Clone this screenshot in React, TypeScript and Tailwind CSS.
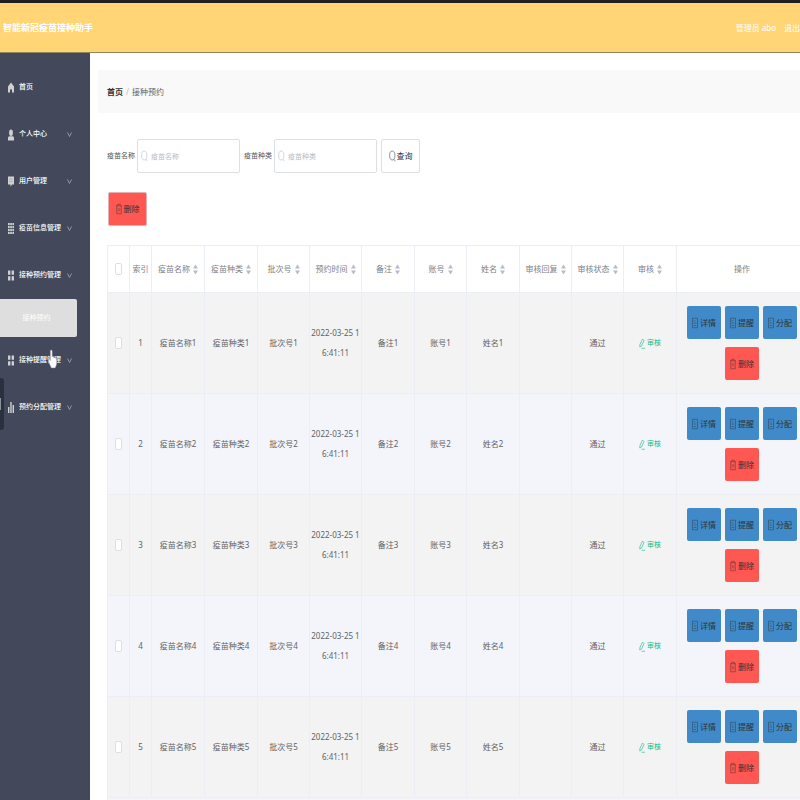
import React from "react";

type IconProps = { className?: string };

function HomeIcon() {
  return (
    <svg className="h-[11px] w-[6px] shrink-0" viewBox="0 0 12 22" fill="currentColor" aria-hidden="true">
      <path d="M6 1 0 9v12h4v-6h4v6h4V9z" />
    </svg>
  );
}

function UserIcon() {
  return (
    <svg className="h-[12px] w-[6px] shrink-0" viewBox="0 0 12 24" fill="currentColor" aria-hidden="true">
      <ellipse cx="6" cy="7.500" rx="3.800" ry="6.500" />
      <path d="M0 23v-5c0-2 1-3 3-3.500h6c2 .5 3 1.500 3 3.500v5z" />
    </svg>
  );
}

function NoteIcon() {
  return (
    <svg className="h-[11px] w-[6px] shrink-0" viewBox="0 0 12 22" fill="currentColor" aria-hidden="true">
      <path d="M0 1h12v16H8l-3 4.500V17H0z" />
      <path d="M2.500 6.500h7M2.500 11h7" stroke="#8f929c" strokeWidth="1" />
    </svg>
  );
}

function GridIcon() {
  return (
    <svg className="h-[11px] w-[6px] shrink-0" viewBox="0 0 12 22" fill="currentColor" aria-hidden="true">
      {[0, 4.4, 8.8].map((x) =>
        [0, 6, 12, 18].map((y) => <rect key={x + "-" + y} x={x} y={y} width="3.400" height="4.400" />)
      )}
    </svg>
  );
}

function MenuIcon() {
  return (
    <svg className="h-[11px] w-[6px] shrink-0" viewBox="0 0 12 22" fill="currentColor" aria-hidden="true">
      <rect x="0" y="1" width="4.800" height="8.500" />
      <rect x="7.200" y="1" width="4.800" height="8.500" />
      <rect x="0" y="12.500" width="4.800" height="8.500" />
      <rect x="7.200" y="12.500" width="4.800" height="8.500" />
    </svg>
  );
}

function BarsIcon() {
  return (
    <svg className="h-[11px] w-[6px] shrink-0" viewBox="0 0 12 22" fill="currentColor" aria-hidden="true">
      <rect x="0" y="10" width="2.800" height="12" />
      <rect x="4.600" y="0" width="2.800" height="22" />
      <rect x="9.200" y="6" width="2.800" height="16" />
    </svg>
  );
}

function ChevronIcon() {
  return (
    <svg className="h-[5px] w-[5px] shrink-0 text-[#9a9eaa]" viewBox="0 0 10 10" fill="none" stroke="currentColor" strokeWidth="1.800" aria-hidden="true">
      <path d="M1 1l4 8 4-8" />
    </svg>
  );
}

function SearchIcon({ className = "" }: IconProps) {
  return (
    <svg className={"h-[12px] w-[7px] shrink-0 " + className} viewBox="0 0 14 24" fill="none" stroke="currentColor" strokeWidth="1.400" aria-hidden="true">
      <ellipse cx="6.500" cy="11" rx="5.300" ry="9" />
      <path d="M9.500 18.500 13 22.500" />
    </svg>
  );
}

function TrashIcon() {
  return (
    <svg className="h-[12px] w-[6px] shrink-0 opacity-80" viewBox="0 0 12 24" fill="none" stroke="currentColor" strokeWidth="1.100" aria-hidden="true">
      <path d="M0 5.500h12M3.500 5.500V2.500h5v3M1.500 5.500V21.500h9V5.500" />
      <path d="M4.600 10v7M7.400 10v7" strokeWidth="0.800" />
    </svg>
  );
}

function DocIcon() {
  return (
    <svg className="h-[12px] w-[6px] shrink-0 opacity-80" viewBox="0 0 12 24" fill="none" stroke="currentColor" strokeWidth="1.100" aria-hidden="true">
      <path d="M1 2.500h10v19H1zM3.500 7.500h3M3.500 12h5M3.500 17h5" />
    </svg>
  );
}

function EditIcon() {
  return (
    <svg className="h-[11px] w-[6px] shrink-0" viewBox="0 0 12 22" fill="none" stroke="currentColor" strokeWidth="1.200" aria-hidden="true">
      <path d="M7 2l3 3-5 11-3.500 2 .5-5.500zM5 20.500h7" />
    </svg>
  );
}

function SortIcon() {
  return (
    <svg className="h-[11px] w-[5px] shrink-0 text-[#b8bcc6]" viewBox="0 0 10 22" fill="currentColor" aria-hidden="true">
      <path d="M5 1l5 8H0zM5 21l5-8H0z" />
    </svg>
  );
}

const menu = [
  { label: "首页", icon: <HomeIcon /> },
  { label: "个人中心", icon: <UserIcon />, more: true },
  { label: "用户管理", icon: <NoteIcon />, more: true },
  { label: "疫苗信息管理", icon: <GridIcon />, more: true },
  { label: "接种预约管理", icon: <MenuIcon />, more: true, child: "接种预约" },
  { label: "接种提醒管理", icon: <MenuIcon />, more: true },
  { label: "预约分配管理", icon: <BarsIcon />, more: true },
];

const columns = [
  "疫苗名称",
  "疫苗种类",
  "批次号",
  "预约时间",
  "备注",
  "账号",
  "姓名",
  "审核回复",
  "审核状态",
  "审核",
];

const rows = [1, 2, 3, 4, 5];

const cell = "border-r border-b border-[#ebeef5] p-0 text-center font-normal";

function Check({ label }: { label: string }) {
  return (
    <input
      type="checkbox"
      aria-label={label}
      className="mx-auto block h-[12px] w-[7px] appearance-none rounded-[2px] border border-[#dcdfe6] bg-white"
    />
  );
}

function ActionButton({ kind, children }: { kind: "info" | "danger"; children: React.ReactNode }) {
  return (
    <button
      type="button"
      className={
        "flex h-[33px] w-[34px] items-center justify-center gap-0.5 rounded-[2px] text-[8px] text-[#303338] " +
        (kind === "info" ? "bg-[#408ac9]" : "bg-[#ff5751]")
      }
    >
      {kind === "info" ? <DocIcon /> : <TrashIcon />}
      <span>{children}</span>
    </button>
  );
}

function SearchField({ id, label }: { id: string; label: string }) {
  return (
    <div className="flex items-center gap-0.5">
      <label htmlFor={id} className="w-[28px] text-[7px] whitespace-nowrap text-[#505255]">
        {label}
      </label>
      <div className="relative">
        <SearchIcon className="absolute top-[11px] left-[4px] text-[#c0c4cc]" />
        <input
          id={id}
          type="text"
          placeholder={label}
          className="h-[34px] w-[103px] rounded-[2px] border border-[#dcdfe6] bg-white pr-1 pl-[13px] text-[7px] placeholder:text-[#b8bcc6]"
        />
      </div>
    </div>
  );
}

export default function App() {
  return (
    <div className="flex h-screen min-h-[800px] flex-col overflow-hidden bg-white font-['Noto_Sans','Noto_Sans_CJK_SC',sans-serif] text-[8px] text-[#606266]">
      <header className="flex h-[53px] shrink-0 items-center justify-between border-t-[3px] border-b border-t-[#1f2020] border-b-[#93835f] bg-[#ffd576] pl-[3px] text-white">
        <h1 className="text-[9px] font-bold whitespace-nowrap">智能新冠疫苗接种助手</h1>
        <div className="flex gap-2 whitespace-nowrap">
          <span>管理员 abo</span>
          <a href="#logout">退出</a>
        </div>
      </header>

      <div className="flex min-h-0 flex-1">
        <aside className="relative w-[90px] shrink-0 bg-[#43495b] pt-[11px] text-[7px] text-white">
          <nav>
            <ul>
              {menu.map((item) => (
                <li key={item.label}>
                  <a href="#menu" className="flex h-[47px] items-center pr-[18px] pl-2">
                    <span className="flex text-[#d0d0d3]">{item.icon}</span>
                    <span className="ml-[5px] flex-1 font-medium whitespace-nowrap">{item.label}</span>
                    {item.more && <ChevronIcon />}
                  </a>
                  {item.child && (
                    <a href="#booking" className="mr-[13px] flex h-[38px] items-center justify-center rounded-r-[2px] bg-[#dedede] pr-1 text-white">
                      {item.child}
                    </a>
                  )}
                </li>
              ))}
            </ul>
          </nav>
          <div className="absolute top-[325px] left-0 flex h-[52px] w-[4px] items-center rounded-r-[3px] bg-[#2a313e]">
            <div className="h-[12px] w-px bg-[#8d929c]" />
          </div>
          <svg className="absolute top-[296px] left-[48px] h-[20px] w-[9px]" viewBox="0 0 18 40" aria-hidden="true">
            <path
              d="M6 2c2 0 2.500 1 2.500 3v10l7 3c1.500 1 2 2 2 4v8l-3 8h-8L2 28l-1.500-8 2-1 2 4V5c0-2 .5-3 1.500-3z"
              fill="#fff"
              stroke="#777b86"
              strokeWidth="1"
            />
          </svg>
        </aside>

        <main className="min-w-0 flex-1 overflow-hidden pt-[17px] pl-2">
          <nav className="flex h-[43px] items-center gap-[3px] bg-[#f9f9f9] pl-[9px]" aria-label="breadcrumb">
            <a href="#home" className="font-bold text-[#303133]">首页</a>
            <span className="text-[#b8bcc6]">/</span>
            <span>接种预约</span>
          </nav>

          <div className="pt-[26px] pl-[9px]">
            <form className="flex items-center gap-1">
              <SearchField id="vaccine-name" label="疫苗名称" />
              <SearchField id="vaccine-kind" label="疫苗种类" />
              <button
                type="button"
                className="flex h-[34px] w-[39px] items-center justify-center gap-px rounded-[2px] border border-[#dcdfe6] bg-white text-[#303133]"
              >
                <SearchIcon className="text-[#606266]" />
                <span>查询</span>
              </button>
            </form>

            <button
              type="button"
              className="mt-[19px] ml-px flex h-[34px] w-[39px] items-center justify-center gap-0.5 rounded-[2px] border border-[#e8aeb0] bg-[#ff5751] text-[#303338]"
            >
              <TrashIcon />
              <span>删除</span>
            </button>

            <table className="mt-[19px] w-full min-w-[701px] table-fixed border-separate border-spacing-0 border-t border-l border-[#ebeef5]">
              <colgroup>
                <col className="w-[22px]" />
                <col className="w-[22px]" />
                <col className="w-[53px]" />
                <col className="w-[53px]" />
                <col className="w-[52px]" />
                <col className="w-[52px]" />
                <col className="w-[53px]" />
                <col className="w-[52px]" />
                <col className="w-[53px]" />
                <col className="w-[52px]" />
                <col className="w-[52px]" />
                <col className="w-[53px]" />
                <col />
              </colgroup>
              <thead className="text-[#7c8087]">
                <tr className="h-[47px]">
                  <th className={cell}><Check label="全选" /></th>
                  <th className={cell + " whitespace-nowrap"}>索引</th>
                  {columns.map((name) => (
                    <th key={name} className={cell}>
                      <div className="flex items-center justify-center gap-[3px] whitespace-nowrap">
                        {name}
                        <SortIcon />
                      </div>
                    </th>
                  ))}
                  <th className={cell}>操作</th>
                </tr>
              </thead>
              <tbody>
                {rows.map((n) => (
                  <tr key={n} className="h-[101px] odd:bg-[#f3f3f3] even:bg-[#f3f5fb]">
                    <td className={cell}><Check label={"选择" + n} /></td>
                    <td className={cell}>{n}</td>
                    <td className={cell}>疫苗名称{n}</td>
                    <td className={cell}>疫苗种类{n}</td>
                    <td className={cell}>批次号{n}</td>
                    <td className={cell + " leading-[20px] whitespace-nowrap"}>
                      2022-03-25 1<br />6:41:11
                    </td>
                    <td className={cell}>备注{n}</td>
                    <td className={cell}>账号{n}</td>
                    <td className={cell}>姓名{n}</td>
                    <td className={cell} />
                    <td className={cell}>通过</td>
                    <td className={cell}>
                      <button type="button" className="inline-flex items-center gap-0.5 align-middle text-[7px] text-[#13b987]">
                        <EditIcon />
                        <span>审核</span>
                      </button>
                    </td>
                    <td className={cell}>
                      <div className="flex flex-wrap justify-center gap-x-1 gap-y-2 px-2">
                        <ActionButton kind="info">详情</ActionButton>
                        <ActionButton kind="info">提醒</ActionButton>
                        <ActionButton kind="info">分配</ActionButton>
                        <div className="flex w-full justify-center">
                          <ActionButton kind="danger">删除</ActionButton>
                        </div>
                      </div>
                    </td>
                  </tr>
                ))}
                <tr className="h-2 bg-[#f3f5fb]">
                  <td colSpan={13} />
                </tr>
              </tbody>
            </table>
          </div>
        </main>
      </div>
    </div>
  );
}
